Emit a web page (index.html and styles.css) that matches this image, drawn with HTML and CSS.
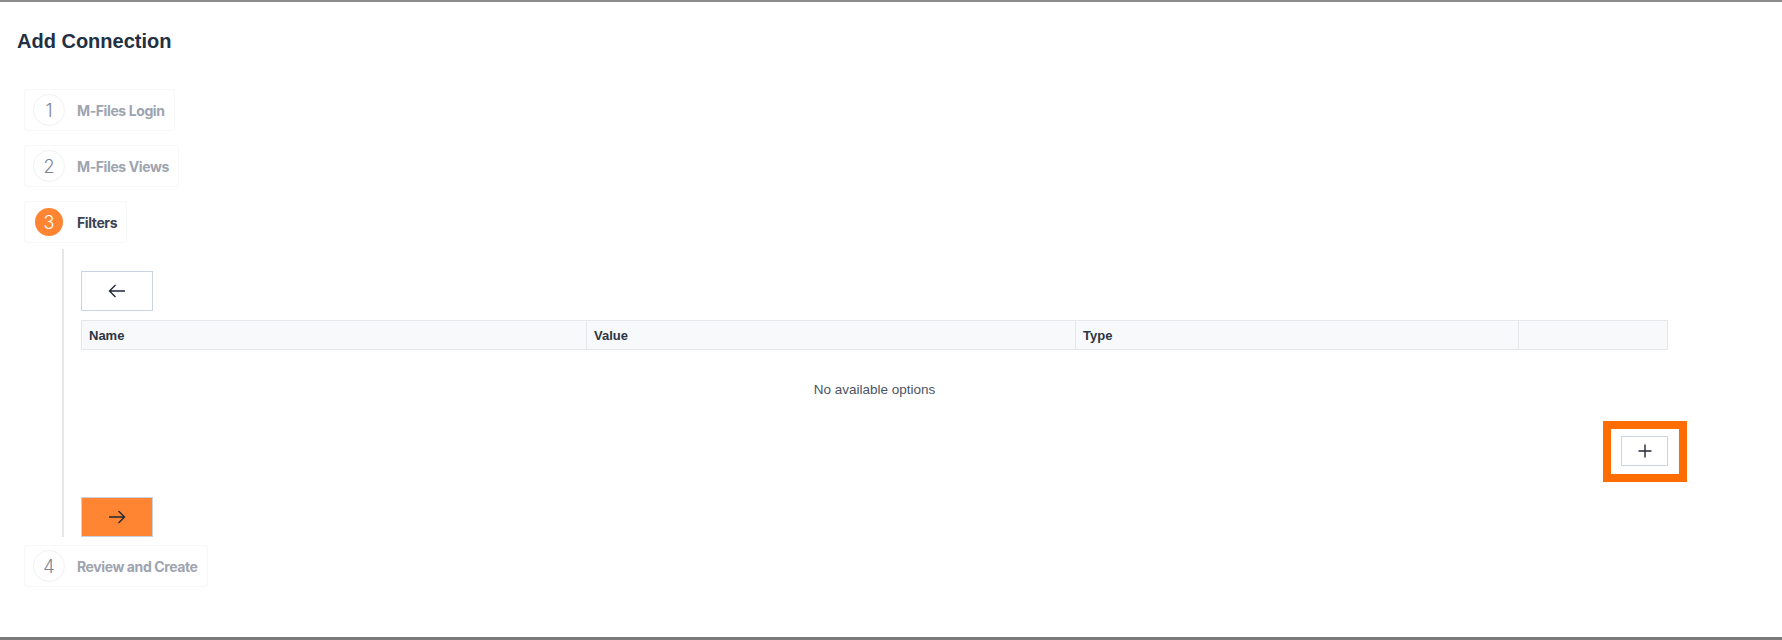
FILE: index.html
```html
<!DOCTYPE html>
<html lang="en">
<head>
    <link rel="stylesheet" href="styles.css">
</head>
<body>
    <div class="page">
        <h1 class="page-title">Add Connection</h1>

        <ul class="steps">
            <li class="step">
                <div class="step-head">
                    <span class="step-num">1</span>
                    <span class="step-label">M-Files Login</span>
                </div>
            </li>
            <li class="step">
                <div class="step-head">
                    <span class="step-num">2</span>
                    <span class="step-label">M-Files Views</span>
                </div>
            </li>
            <li class="step active">
                <div class="step-head">
                    <span class="step-num">3</span>
                    <span class="step-label">Filters</span>
                </div>
                <div class="step-content">
                    <button class="icon-btn">
                        <svg width="18" height="14" viewBox="0 0 18 14"><path d="M17 7H1.5M7.5 1L1.5 7l6 6" fill="none" stroke="#1f2937" stroke-width="1.4"/></svg>
                    </button>

                    <div class="filters-table">
                        <div class="table-head">
                            <div class="th">Name</div>
                            <div class="th">Value</div>
                            <div class="th">Type</div>
                            <div class="th"></div>
                        </div>
                        <div class="table-empty">No available options</div>
                    </div>

                    <div class="add-row">
                        <div class="highlight">
                            <button class="add-btn">
                                <svg width="14" height="14" viewBox="0 0 14 14"><path d="M7 0.5v13M0.5 7h13" fill="none" stroke="#1f2937" stroke-width="1.4"/></svg>
                            </button>
                        </div>
                    </div>

                    <button class="icon-btn next-btn">
                        <svg width="18" height="14" viewBox="0 0 18 14"><path d="M1 7h15.5M10.5 1l6 6-6 6" fill="none" stroke="#1f2937" stroke-width="1.4"/></svg>
                    </button>
                </div>
            </li>
            <li class="step">
                <div class="step-head">
                    <span class="step-num">4</span>
                    <span class="step-label">Review and Create</span>
                </div>
            </li>
        </ul>
    </div>
</body>
</html>
```

FILE: styles.css
```css
body {
    margin: 0;
    background-color: #fff;
    font-family: 'Inter', 'Liberation Sans', sans-serif;
    color: #1f2937;
}

.page {
    height: 640px;
    box-sizing: border-box;
    border-top: 2px solid #8c8c8c;
    border-bottom: 3px solid #7b7b7b;
    padding: 27px 0 0 17px;
}

.page-title {
    margin: 0;
    font-family: 'Liberation Sans', Arial, sans-serif;
    font-size: 20px;
    line-height: 24px;
    font-weight: bold;
    color: #223043;
}

.steps {
    list-style: none;
    margin: 36px 0 0 7px;
    padding: 0;
}

.step {
    margin-bottom: 14px;
}

.step-head {
    display: inline-flex;
    align-items: center;
    height: 42px;
    box-sizing: border-box;
    padding: 0 9px 0 8px;
    border: 1px solid #f6f7f8;
    border-radius: 3px;
}

.step-num {
    width: 32px;
    height: 32px;
    box-sizing: border-box;
    border: 1px solid #f0f1f3;
    border-radius: 50%;
    display: flex;
    align-items: center;
    justify-content: center;
    font-size: 18px;
    font-weight: 300;
    color: #7b8494;
}

.step-label {
    margin-left: 12px;
    font-size: 14px;
    font-weight: 700;
    letter-spacing: -0.4px;
    color: #9ea4af;
}

.step.active {
    margin-bottom: 8px;
}

.step.active .step-num {
    background-color: #ff8533;
    border: 2px solid #fff;
    color: #fff;
}

.step.active .step-label {
    color: #3a4456;
}

.step-content {
    margin: 6px 0 0 38px;
    border-left: 2px solid #e5e7eb;
    padding: 22px 0 0 17px;
    width: 1587px;
}

.icon-btn {
    width: 72px;
    height: 40px;
    display: flex;
    align-items: center;
    justify-content: center;
    background-color: #fff;
    border: 1px solid #cbd5e1;
    border-radius: 0;
    padding: 0;
    cursor: pointer;
}

.filters-table {
    margin-top: 9px;
    font-family: 'Liberation Sans', Arial, sans-serif;
}

.table-head {
    display: grid;
    grid-template-columns: 504px 489px 443px 1fr;
    height: 30px;
    box-sizing: border-box;
    background-color: #f8f9fb;
    border: 1px solid #e5e7eb;
}

.th {
    display: flex;
    align-items: center;
    padding-left: 7px;
    font-size: 13px;
    font-weight: bold;
    color: #2b3544;
    border-left: 1px solid #e5e7eb;
}

.th:first-child {
    border-left: none;
}

.table-empty {
    height: 78px;
    display: flex;
    align-items: center;
    justify-content: center;
    font-size: 13.5px;
    color: #4b5563;
}

.add-row {
    display: flex;
    justify-content: flex-end;
    margin-top: 8px;
}

.highlight {
    position: relative;
}

.highlight::after {
    content: "";
    position: absolute;
    top: -15px;
    bottom: -16px;
    left: -18px;
    right: -19px;
    border: 8px solid #ff6d00;
    pointer-events: none;
}

.add-btn {
    width: 47px;
    height: 30px;
    display: flex;
    align-items: center;
    justify-content: center;
    background-color: #fff;
    border: 1px solid #cbd5e1;
    padding: 0;
    cursor: pointer;
}

.next-btn {
    margin-top: 31px;
    background-color: #ff8533;
    border-color: #c9d4e0;
}
```
